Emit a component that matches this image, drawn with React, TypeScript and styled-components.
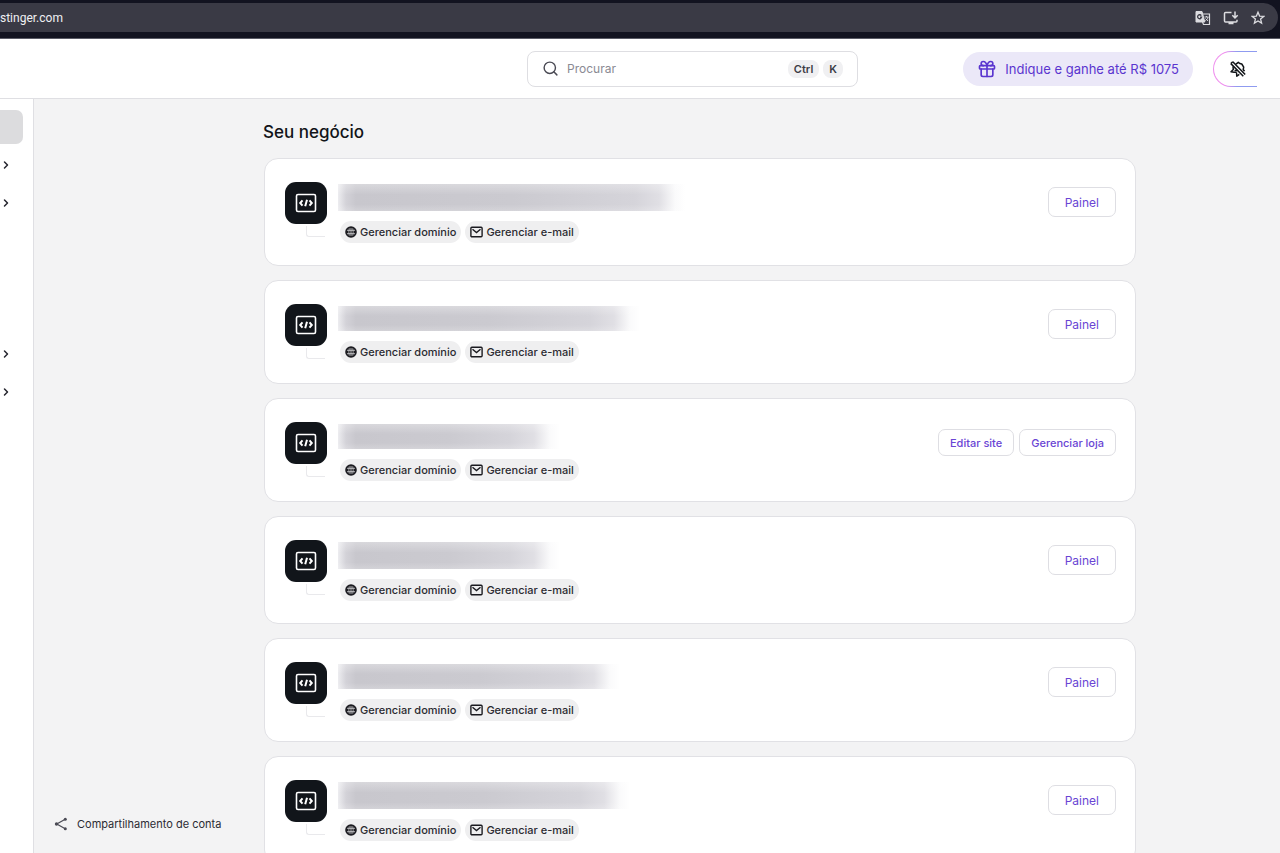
import React from "react";
import styled, { createGlobalStyle, css } from "styled-components";
import { ChevronRight, Gift, Search } from "lucide-react";

const GlobalStyle = createGlobalStyle`
  * { box-sizing: border-box; }
  html, body { margin: 0; height: 100%; overflow: hidden; }
  #root { height: 100%; }
  body, button, input { font-family: Inter, "Liberation Sans", sans-serif; }
  button { cursor: pointer; margin: 0; }
  a { text-decoration: none; color: inherit; }
`;

const Page = styled.div`
  display: flex;
  flex-direction: column;
  height: 100vh;
  overflow: hidden;
  background: #f3f3f4;
`;

const BrowserBar = styled.header`
  flex: none;
  padding: 3px 2px 6px 0;
  background: #121320;
  border-bottom: 1px solid #5a5b66;
`;

const AddressBar = styled.div`
  display: flex;
  align-items: center;
  justify-content: space-between;
  height: 29px;
  padding-right: 13px;
  border-radius: 0 15px 15px 0;
  background: #3a3a45;
  color: #f0f0f3;
  font: 12px/16px Roboto, sans-serif;
`;

const Address = styled.span`
  white-space: nowrap;
`;

const BarActions = styled.div`
  display: flex;
  gap: 12px;
`;

const BarButton = styled.button`
  display: flex;
  padding: 0;
  border: 0;
  background: none;
  color: #dcdce0;
`;

const TopBar = styled.div`
  flex: none;
  display: grid;
  grid-template-columns: 1fr 331px 1fr;
  align-items: center;
  height: 60px;
  padding-right: 23px;
  padding-left: 128px;
  background: #fff;
  border-bottom: 1px solid #dfdfe3;
`;

const SearchBox = styled.label`
  grid-column: 2;
  display: flex;
  align-items: center;
  height: 36px;
  padding: 0 14px;
  border: 1px solid #dedee2;
  border-radius: 8px;
  color: #4a4a54;
`;

const SearchInput = styled.input`
  flex: 1;
  min-width: 0;
  margin-left: 8px;
  padding: 0;
  border: 0;
  outline: 0;
  background: none;
  font-size: 12px;
  line-height: 16px;
  &::placeholder { color: #8a8a93; opacity: 1; }
`;

const Key = styled.kbd`
  margin-left: 4px;
  padding: 0 6px;
  border-radius: 8px;
  background: #f0f0f2;
  color: #3c3c45;
  font: 600 11px/18px Inter, sans-serif;
`;

const TopActions = styled.div`
  display: flex;
  justify-content: flex-end;
  align-items: center;
  gap: 20px;
`;

const ReferButton = styled.button`
  display: flex;
  align-items: center;
  gap: 8px;
  height: 34px;
  padding: 0 14px;
  border: 0;
  border-radius: 17px;
  background: #ebe8f8;
  color: #5a35cf;
  font-size: 13px;
  white-space: nowrap;
`;

const BellButton = styled.button`
  padding: 1px 0 1px 1px;
  border: 0;
  border-radius: 18px 0 0 18px;
  background: linear-gradient(90deg, #ef8fee 0 12px, #8f9bf0 24px);
`;

const BellInner = styled.span`
  display: flex;
  align-items: center;
  justify-content: center;
  width: 43px;
  height: 34px;
  padding-left: 4px;
  border-radius: 17px 0 0 17px;
  background: #fff;
  color: #111418;
`;

const Body = styled.div`
  flex: 1;
  min-height: 0;
  display: flex;
`;

const Sidebar = styled.nav`
  flex: none;
  width: 34px;
  padding-top: 11px;
  background: #fff;
  border-right: 1px solid #dfdfe3;
`;

const ActiveItem = styled.a`
  display: block;
  width: 23px;
  height: 34px;
  margin-bottom: 2px;
  border-radius: 0 7px 7px 0;
  background: #dcdcde;
`;

const NavGroup = styled.div<{ $spaced?: boolean }>`
  margin-top: ${(p) => (p.$spaced ? 113 : 0)}px;
`;

const NavButton = styled.button`
  display: flex;
  align-items: center;
  width: 100%;
  height: 38px;
  padding: 0;
  border: 0;
  background: none;
  color: #25252e;
`;

const ShareColumn = styled.aside`
  flex: none;
  width: 229px;
  display: flex;
  align-items: flex-end;
  padding: 0 0 20px 20px;
`;

const ShareLink = styled.a`
  display: flex;
  align-items: center;
  gap: 9px;
  color: #2b2b33;
  font-size: 11px;
  line-height: 18px;
  white-space: nowrap;
`;

const Main = styled.main`
  flex: 1;
  min-width: 0;
  padding: 22px 144px 0 0;
`;

const Heading = styled.h1`
  margin: 0 0 14px;
  color: #111418;
  font-size: 17px;
  font-weight: 500;
  line-height: 23px;
`;

const SiteList = styled.div`
  display: flex;
  flex-direction: column;
  gap: 14px;
`;

const Card = styled.article<{ $compact?: boolean }>`
  flex: none;
  display: flex;
  align-items: flex-start;
  height: ${(p) => (p.$compact ? 104 : 108)}px;
  margin-left: 1px;
  padding: 23px 19px 0 20px;
  border: 1px solid #e1e1e5;
  border-radius: 14px;
  background: #fff;
`;

const SiteMark = styled.div`
  flex: none;
  width: 42px;
`;

const SiteIcon = styled.span`
  display: flex;
  align-items: center;
  justify-content: center;
  height: 42px;
  border-radius: 11px;
  background: #11151a;
  color: #fff;
`;

const Elbow = styled.span`
  display: block;
  width: 19px;
  height: 11px;
  margin: 2px 0 0 21px;
  border: solid #e9e9ec;
  border-width: 0 0 1px 1px;
  border-radius: 0 0 0 3px;
`;

const SiteInfo = styled.div`
  flex: 1;
  margin-left: 11px;
`;

const HiddenName = styled.div<{ $width: number; $compact?: boolean }>`
  width: ${(p) => p.$width}px;
  height: ${(p) => (p.$compact ? 25 : 27)}px;
  margin: 2px 0 10px;
  background:
    linear-gradient(180deg, rgba(255, 255, 255, 0.3), transparent 40% 75%, rgba(255, 255, 255, 0.2)),
    linear-gradient(90deg, #ededf0, #d3d2d8 8px, #c8c7cd 18px, #cbcad0 50%, #d5d4da calc(100% - 50px), #e0dfe4 calc(100% - 26px), #fafafb calc(100% - 10px), #fff);
`;

const Pills = styled.div`
  display: flex;
  gap: 4px;
  margin-left: 2px;
`;

const Pill = styled.a`
  display: flex;
  align-items: center;
  gap: 3px;
  height: 22px;
  padding: 0 5px;
  border-radius: 11px;
  background: #efeff0;
  color: #2b2b31;
  font-size: 11px;
  font-weight: 500;
  white-space: nowrap;
`;

const Actions = styled.div`
  display: flex;
  gap: 5px;
  margin-top: 5px;
`;

const ActionButton = styled.button<{ $small?: boolean }>`
  height: 30px;
  padding: 0 16px;
  border: 1px solid #dedee3;
  border-radius: 7px;
  background: #fff;
  color: #6a45d4;
  font-size: 12px;
  white-space: nowrap;
  ${(p) =>
    p.$small &&
    css`
      height: 27px;
      margin-top: 2px;
      padding: 0 11px;
      font-size: 11px;
      font-weight: 500;
    `}
`;

const TranslateIcon = () => (
  <svg width="16" height="16" viewBox="0 0 16 16" fill="none" stroke="currentColor">
    <path d="M8 4h6.500v10.500H8.500l-1-2.500" strokeWidth="1.200" />
    <path d="M1 1.500h6l2.800 10.500H1z" fill="currentColor" />
    <path d="M6.300 5.600a2 2 0 1 0 .3 1.600H5" stroke="#3a3a45" strokeWidth="1.300" />
    <path d="M9.500 7h4M11.500 6v1M13 7c-.4 2-1.500 3-2.700 3.700M10.500 8.500l2.500 2.500" strokeWidth=".9" />
  </svg>
);

const InstallIcon = () => (
  <svg width="16" height="16" viewBox="0 0 16 16" fill="none" stroke="currentColor" strokeWidth="1.500">
    <path d="M8.500 2.500H2.500a1 1 0 0 0-1 1V11a1 1 0 0 0 1 1H13a1 1 0 0 0 1-1V9.800M5.500 13.500h5M12 1.500v6M9.300 5.200 12 7.900l2.700-2.700" />
  </svg>
);

const StarIcon = () => (
  <svg width="14" height="16" viewBox="0 0 14 16" fill="none" stroke="currentColor" strokeWidth="1.300">
    <path d="m7 2.300 1.600 3.800 4.100.3-3.100 2.700 1 4L7 10.900l-3.600 2.200 1-4L1.300 6.400l4.100-.3z" />
  </svg>
);

const BellOffIcon = () => (
  <svg width="18" height="18" viewBox="0 0 18 18" fill="none" stroke="currentColor" strokeWidth="1.500" strokeLinejoin="round">
    <path d="M3.800 1.800 16.200 14.600M1.800 3.600 14.300 16.200" />
    <path d="M3.800 1.800 1.800 3.600" />
    <path d="M7 4.200 9.300 2.300l1.500 1.200 2 .5 1.900 3.200-.5 2.300 1.300 1.800" />
    <path d="M4 6.500l.3 3-2.300 2.300 3 .4h2.700M7.500 12.500l.3 3.700 2.500-1.800" />
    <path d="M5.500 10.500h3" />
  </svg>
);

const ShareIcon = () => (
  <svg width="14" height="14" viewBox="0 0 14 14" fill="none" stroke="#4a4a54" strokeWidth="1.200">
    <path d="M11.200 2.300 2.800 7l8.400 4.700" />
    <g fill="#4a4a54" stroke="none">
      <circle cx="11.300" cy="2.300" r="1.500" />
      <circle cx="2.500" cy="7" r="1.700" />
      <circle cx="11.300" cy="11.700" r="1.500" />
    </g>
  </svg>
);

const CodeIcon = () => (
  <svg width="22" height="20" viewBox="0 0 22 20" fill="none" stroke="currentColor">
    <rect x="1.500" y="1.500" width="19" height="17" rx="1.500" strokeWidth="1.600" />
    <path d="M7.500 7.300 5.200 10l2.300 2.700M14.500 7.300l2.300 2.700-2.300 2.700M12 6.800l-1.800 6.400" strokeWidth="2" />
  </svg>
);

const GlobeIcon = () => (
  <svg width="12" height="12" viewBox="0 0 12 12" fill="none">
    <circle cx="6" cy="6" r="5.800" fill="#1b1b20" />
    <path d="M2 4.300h8M2 7.700h8M6 2v8" stroke="#efeff0" strokeWidth=".7" />
    <path d="M4.300 2.300Q3.300 6 4.300 9.700M7.700 2.300Q8.700 6 7.700 9.700" stroke="#efeff0" strokeWidth=".6" />
  </svg>
);

const MailIcon = () => (
  <svg width="13" height="12" viewBox="0 0 13 12" fill="none" stroke="#1b1b20" strokeWidth="1.400">
    <rect x=".9" y="1.300" width="11.200" height="9.400" rx="1" />
    <path d="m2.500 3.300 4 3.200 4-3.200" />
  </svg>
);

type Site = { width: number; compact?: boolean; store?: boolean };

const sites: Site[] = [
  { width: 347 },
  { width: 302, compact: true },
  { width: 222, compact: true, store: true },
  { width: 222 },
  { width: 282, compact: true },
  { width: 292 },
];

const SiteCard = ({ width, compact, store }: Site) => (
  <Card $compact={compact}>
    <SiteMark>
      <SiteIcon><CodeIcon /></SiteIcon>
      <Elbow />
    </SiteMark>
    <SiteInfo>
      <HiddenName $width={width} $compact={compact} />
      <Pills>
        <Pill href="#dominio"><GlobeIcon />Gerenciar domínio</Pill>
        <Pill href="#email"><MailIcon />Gerenciar e-mail</Pill>
      </Pills>
    </SiteInfo>
    <Actions>
      {store ? (
        <>
          <ActionButton $small>Editar site</ActionButton>
          <ActionButton $small>Gerenciar loja</ActionButton>
        </>
      ) : (
        <ActionButton>Painel</ActionButton>
      )}
    </Actions>
  </Card>
);

const NavToggle = ({ label }: { label: string }) => (
  <NavButton aria-label={label}>
    <ChevronRight size={12} strokeWidth={3} />
  </NavButton>
);

export default function App() {
  return (
    <Page>
      <GlobalStyle />
      <BrowserBar>
        <AddressBar>
          <Address>stinger.com</Address>
          <BarActions>
            <BarButton aria-label="Traduzir"><TranslateIcon /></BarButton>
            <BarButton aria-label="Instalar"><InstallIcon /></BarButton>
            <BarButton aria-label="Favoritos"><StarIcon /></BarButton>
          </BarActions>
        </AddressBar>
      </BrowserBar>
      <TopBar>
        <SearchBox>
          <Search size={17} strokeWidth={2} />
          <SearchInput type="search" placeholder="Procurar" aria-label="Procurar" />
          <Key>Ctrl</Key>
          <Key>K</Key>
        </SearchBox>
        <TopActions>
          <ReferButton><Gift size={20} strokeWidth={2} />Indique e ganhe até R$ 1075</ReferButton>
          <BellButton aria-label="Notificações"><BellInner><BellOffIcon /></BellInner></BellButton>
        </TopActions>
      </TopBar>
      <Body>
        <Sidebar>
          <ActiveItem href="#inicio" aria-label="Início" />
          <NavGroup>
            <NavToggle label="Sites" />
            <NavToggle label="Domínios" />
          </NavGroup>
          <NavGroup $spaced>
            <NavToggle label="E-mails" />
            <NavToggle label="VPS" />
          </NavGroup>
        </Sidebar>
        <ShareColumn>
          <ShareLink href="#compartilhar"><ShareIcon />Compartilhamento de conta</ShareLink>
        </ShareColumn>
        <Main>
          <Heading>Seu negócio</Heading>
          <SiteList>
            {sites.map((site, i) => <SiteCard key={i} {...site} />)}
          </SiteList>
        </Main>
      </Body>
    </Page>
  );
}
